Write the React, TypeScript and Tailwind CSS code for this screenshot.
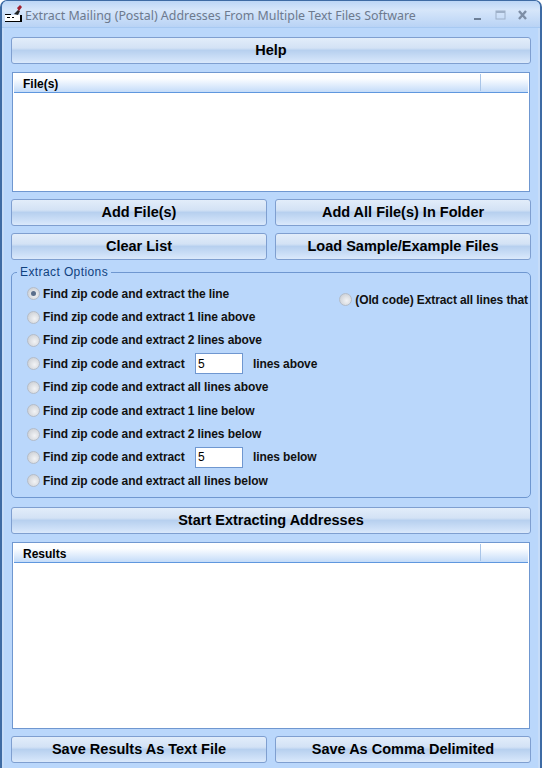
const font = "font-['Liberation_Sans',Arial,sans-serif]";

function Btn({ label, className = "" }: { label: string; className?: string }) {
  return (
    <button
      className={`h-[27px] flex items-center justify-center rounded-[3px] border border-[#7f9fd0] bg-[linear-gradient(#e2edfa_0%,#d3e2f5_40%,#b7d0ef_50%,#cfe1f8_85%,#dbe9fb_100%)] text-[14.5px] font-bold text-black ${className}`}
    >
      {label}
    </button>
  );
}

function Radio({ checked = false }: { checked?: boolean }) {
  return (
    <span className="w-[13px] h-[13px] shrink-0 rounded-full border border-[#b4bcc8] bg-[radial-gradient(circle_at_60%_60%,#f2f3f5,#c4c8ce)] flex items-center justify-center">
      {checked && <span className="w-[5px] h-[5px] rounded-full bg-[#5b6f8c]" />}
    </span>
  );
}

function Opt({ label, checked, input, suffix }: { label: string; checked?: boolean; input?: boolean; suffix?: string }) {
  return (
    <div className="h-[23.4px] flex items-center text-[12px] tracking-[-0.1px] font-bold text-[#111]">
      <span className="ml-[1px] mr-[3px]"><Radio checked={checked} /></span>
      <span className="w-[152px] whitespace-nowrap">{label}</span>
      {input && (
        <>
          <span className="w-[48px] h-[21px] border border-[#6f97d0] bg-white flex items-center pl-[2px] font-normal text-[12px] text-black">5</span>
          <span className="ml-[10px]">{suffix}</span>
        </>
      )}
    </div>
  );
}

function ListBox({ title, className = "" }: { title: string; className?: string }) {
  return (
    <div className={`mx-[1px] border border-[#6f97d0] bg-white flex flex-col ${className}`}>
      <div className="h-[20px] shrink-0 mr-[1px] ml-[1px] flex items-center border-b border-[#5f97de] bg-[linear-gradient(#ffffff,#fbfdff_30%,#c4dcf9)] text-[12px] font-bold text-black pl-[9px] pt-[2px]">
        <span className="flex-1">{title}</span>
        <span className="w-[48px] h-[17px] -mt-[2px] border-l border-[#a9c5e8]" />
      </div>
    </div>
  );
}

export default function App() {
  return (
    <div className={`${font} w-[542px] h-[781px] bg-white`}>
      <div className="w-[542px] h-[768px] bg-[#bad7fb] flex flex-col rounded-t-[7px] border-t border-l-[2px] border-r-[2px] border-[#3e6ba4] overflow-hidden">
        <div className="h-[27px] shrink-0 flex items-center pl-[2px] pr-[8px] pt-[4px] border-b border-[#a7c9f2] bg-[linear-gradient(#bcd6f6,#d6e6fa_35%,#b9d3f5)]">
          <svg width="20" height="18" viewBox="0 0 20 18" className="shrink-0 -mt-[4px]">
            <rect x="1" y="10" width="16" height="6" fill="#fff" />
            <path d="M1 9h6v1H1zM1 16h17v1H1zM16 10h2v6h-2zM3 12h3v1H3zM8 12h2v1H8z" fill="#000" />
            <path d="M10 9 L14 5 L16 6 L14 10Z" fill="#222" />
            <path d="M13 3 L16 0 L18 2 L15 6Z" fill="#a02030" />
          </svg>
          <span className="ml-[1px] text-[12.4px] text-[#6d7a8e] font-['Noto_Sans','Open_Sans',sans-serif] whitespace-nowrap">
            Extract Mailing (Postal) Addresses From Multiple Text Files Software
          </span>
          <span className="flex-1" />
          <svg width="58" height="14" viewBox="0 0 58 14" className="shrink-0 mr-[1px]">
            <rect x="1" y="9" width="7" height="2" fill="#6d7f97" />
            <rect x="23" y="2" width="9" height="8" fill="none" stroke="#9eb0c8" strokeWidth="1" />
            <rect x="23" y="2" width="9" height="2" fill="#9eb0c8" />
            <path d="M46 2 L53 10 M53 2 L46 10" stroke="#7d8ea6" strokeWidth="2.4" />
          </svg>
        </div>

        <div className="flex-1 flex flex-col border-x-[2px] border-[#c6dcf8] px-[7px] pt-[9px]">
          <Btn label="Help" />
          <ListBox title="File(s)" className="h-[120px] mt-[8px]" />
          <div className="grid grid-cols-2 gap-x-[8px] gap-y-[7px] mt-[7px]">
            <Btn label="Add File(s)" />
            <Btn label="Add All File(s) In Folder" />
            <Btn label="Clear List" />
            <Btn label="Load Sample/Example Files" />
          </div>

          <div className="relative mt-[12px] h-[226px] border border-[#6f97d0] rounded-[5px] pl-[14px] pt-[9px]">
            <span className="absolute -top-[8px] left-[5px] px-[3px] bg-[#bad7fb] text-[12px] leading-[14px] text-[#10427f] tracking-[0.4px]">Extract Options</span>
            <div className="absolute top-[17px] right-[0px] flex items-center bg-[#bad7fb] h-[19px] text-[12px] tracking-[-0.1px] font-bold text-[#111] pr-[2px]">
              <span className="mr-[3px]"><Radio /></span>
              (Old code) Extract all lines that
            </div>
            <Opt label="Find zip code and extract the line" checked />
            <Opt label="Find zip code and extract 1 line above" />
            <Opt label="Find zip code and extract 2 lines above" />
            <Opt label="Find zip code and extract" input suffix="lines above" />
            <Opt label="Find zip code and extract all lines above" />
            <Opt label="Find zip code and extract 1 line below" />
            <Opt label="Find zip code and extract 2 lines below" />
            <Opt label="Find zip code and extract" input suffix="lines below" />
            <Opt label="Find zip code and extract all lines below" />
          </div>

          <Btn label="Start Extracting Addresses" className="mt-[9px]" />
          <ListBox title="Results" className="h-[187px] mt-[8px]" />
          <div className="grid grid-cols-2 gap-x-[8px] mt-[7px]">
            <Btn label="Save Results As Text File" />
            <Btn label="Save As Comma Delimited" />
          </div>
        </div>
      </div>
    </div>
  );
}
